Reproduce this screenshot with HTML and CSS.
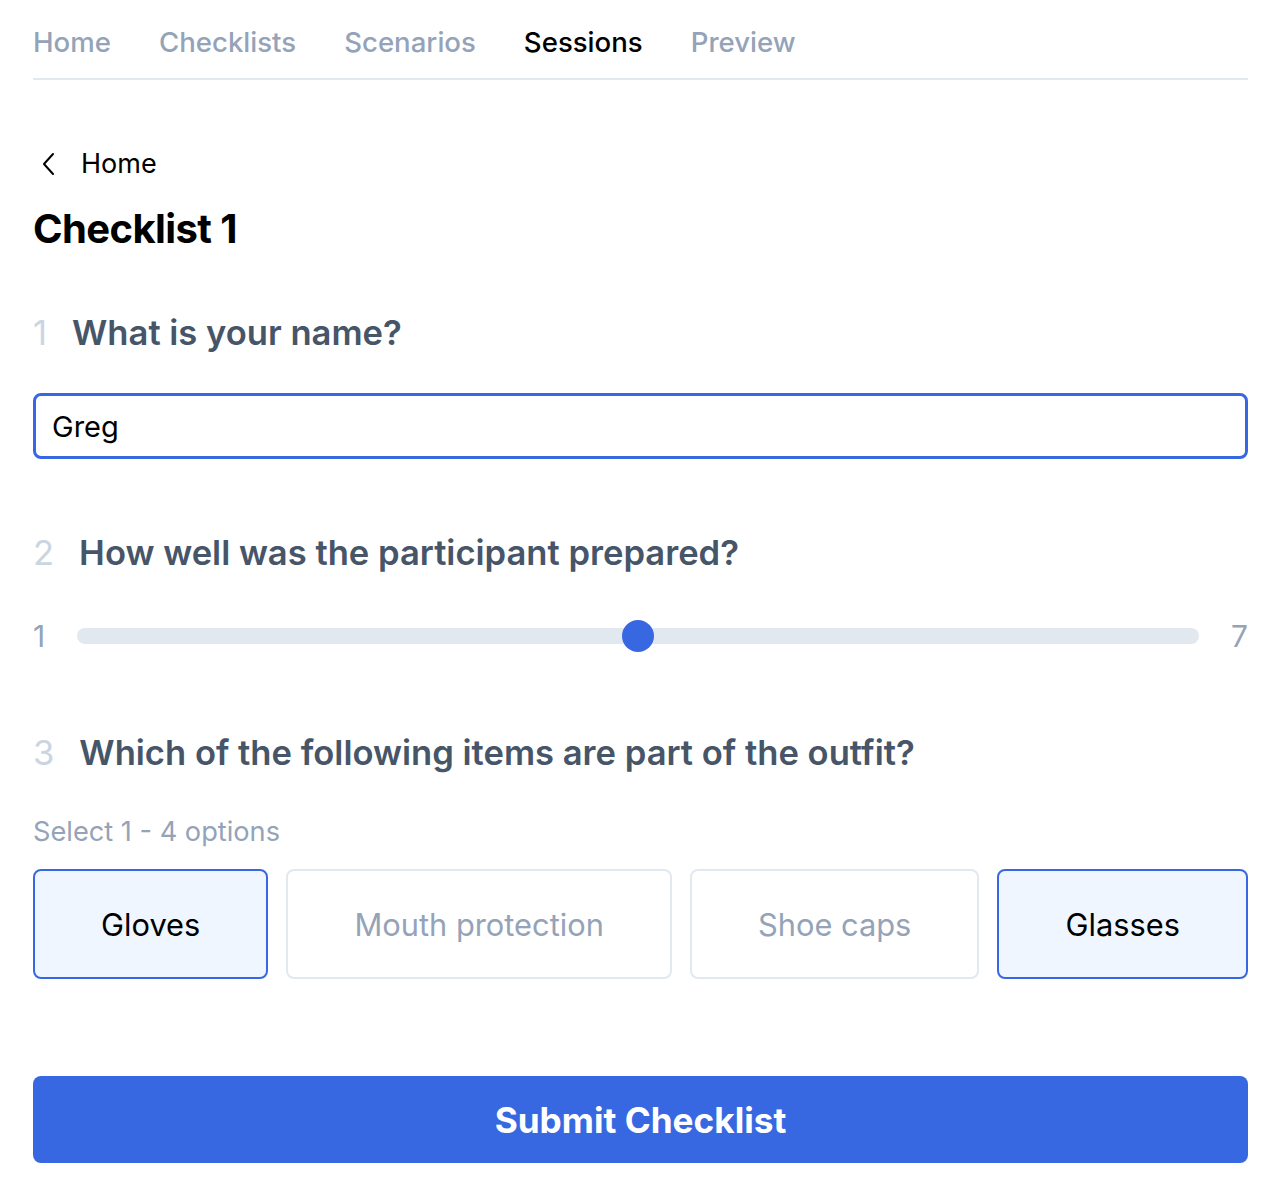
FILE: index.html
```html
<!DOCTYPE html>
<html lang="en">
<head>
    <meta charset="UTF-8">
    <meta name="viewport" content="width=device-width, initial-scale=1.0">
    <title>Checklist 1</title>
    <link rel="stylesheet" href="styles.css">
</head>
<body>
    <div class="page">
        <nav class="nav">
            <a href="#">Home</a>
            <a href="#">Checklists</a>
            <a href="#">Scenarios</a>
            <a href="#" class="active">Sessions</a>
            <a href="#">Preview</a>
        </nav>

        <a href="#" class="back">
            <svg width="14" height="24" viewBox="0 0 14 24" fill="none" stroke="currentColor" stroke-width="2" stroke-linecap="round" stroke-linejoin="round">
                <path d="M11 2 L2 12 L11 22"/>
            </svg>
            Home
        </a>
        <h1 class="title">Checklist 1</h1>

        <form id="checklist-form">
            <div class="question q-name">
                <span class="num">1</span>
                <span class="label">What is your name?</span>
            </div>
            <input type="text" class="text-input" name="name" value="Greg">

            <div class="question q-scale">
                <span class="num">2</span>
                <span class="label">How well was the participant prepared?</span>
            </div>
            <div class="scale">
                <span class="scale-end">1</span>
                <input type="range" class="range" name="prepared" min="1" max="7" value="4">
                <span class="scale-end">7</span>
            </div>

            <div class="question q-items">
                <span class="num">3</span>
                <span class="label">Which of the following items are part of the outfit?</span>
            </div>
            <p class="hint">Select 1 - 4 options</p>
            <div class="options">
                <button type="button" class="option selected">Gloves</button>
                <button type="button" class="option">Mouth protection</button>
                <button type="button" class="option">Shoe caps</button>
                <button type="button" class="option selected">Glasses</button>
            </div>

            <button type="submit" class="submit">Submit Checklist</button>
        </form>
    </div>
    <script>
        document.querySelectorAll('.option').forEach(function(btn) {
            btn.addEventListener('click', function() {
                this.classList.toggle('selected');
            });
        });
        document.getElementById('checklist-form').addEventListener('submit', function(e) {
            e.preventDefault();
        });
    </script>
</body>
</html>
```

FILE: styles.css
```css
body {
    font-family: Inter, "Noto Sans", sans-serif;
    margin: 0;
    background: #fff;
    color: #000;
}
.page {
    padding: 0 32px 0 33px;
}
.nav {
    display: flex;
    gap: 48px;
    padding: 24px 0 18px;
    border-bottom: 2px solid #e2e8f0;
}
.nav a {
    font-size: 27.6px;
    line-height: 36px;
    font-weight: 500;
    color: #94a3b8;
    text-decoration: none;
}
.nav a.active {
    color: #000;
}
.back {
    display: flex;
    align-items: center;
    gap: 25px;
    margin-top: 66px;
    padding-left: 9px;
    font-size: 27px;
    line-height: 36px;
    color: #000;
    text-decoration: none;
}
.title {
    margin: 23px 0 0;
    font-size: 40px;
    line-height: 48px;
    font-weight: 700;
    letter-spacing: -0.6px;
}
.question {
    display: flex;
    gap: 25px;
    font-size: 34.6px;
    line-height: 44px;
}
.question .num {
    color: #cbd5e1;
}
.question .label {
    font-weight: 600;
    color: #475569;
}
.q-name {
    margin-top: 57px;
}
.q-scale {
    margin-top: 71px;
}
.q-items {
    margin-top: 78px;
}
.text-input {
    display: block;
    box-sizing: border-box;
    width: 100%;
    height: 66px;
    margin-top: 39px;
    padding: 0 16px;
    border: 3px solid #3867e2;
    border-radius: 8px;
    font-family: inherit;
    font-size: 29px;
    color: #000;
    outline: none;
}
.scale {
    display: flex;
    align-items: center;
    gap: 32px;
    margin-top: 46px;
    height: 32px;
}
.scale-end {
    font-size: 30px;
    color: #94a3b8;
}
.range {
    -webkit-appearance: none;
    appearance: none;
    flex: 1;
    margin: 0;
    height: 32px;
    background: transparent;
}
.range::-webkit-slider-runnable-track {
    height: 16px;
    border-radius: 8px;
    background: #e2e8f0;
}
.range::-webkit-slider-thumb {
    -webkit-appearance: none;
    width: 32px;
    height: 32px;
    margin-top: -8px;
    border-radius: 50%;
    background: #3867e2;
    border: none;
}
.hint {
    margin: 40px 0 0;
    font-size: 27.2px;
    line-height: 36px;
    color: #94a3b8;
}
.options {
    display: flex;
    gap: 18px;
    margin-top: 19px;
}
.option {
    flex: 1 1 auto;
    height: 110px;
    padding: 0 20px;
    background: #fff;
    border: 2px solid #e2e8f0;
    border-radius: 8px;
    font-family: inherit;
    font-size: 30.8px;
    color: #94a3b8;
    cursor: pointer;
}
.option.selected {
    background: #eff6ff;
    border-color: #3867e2;
    color: #000;
}
.submit {
    display: block;
    width: 100%;
    height: 87px;
    margin-top: 97px;
    background: #3867e2;
    border: none;
    border-radius: 8px;
    font-family: inherit;
    font-size: 35.2px;
    font-weight: 700;
    color: #fff;
    cursor: pointer;
}
```
